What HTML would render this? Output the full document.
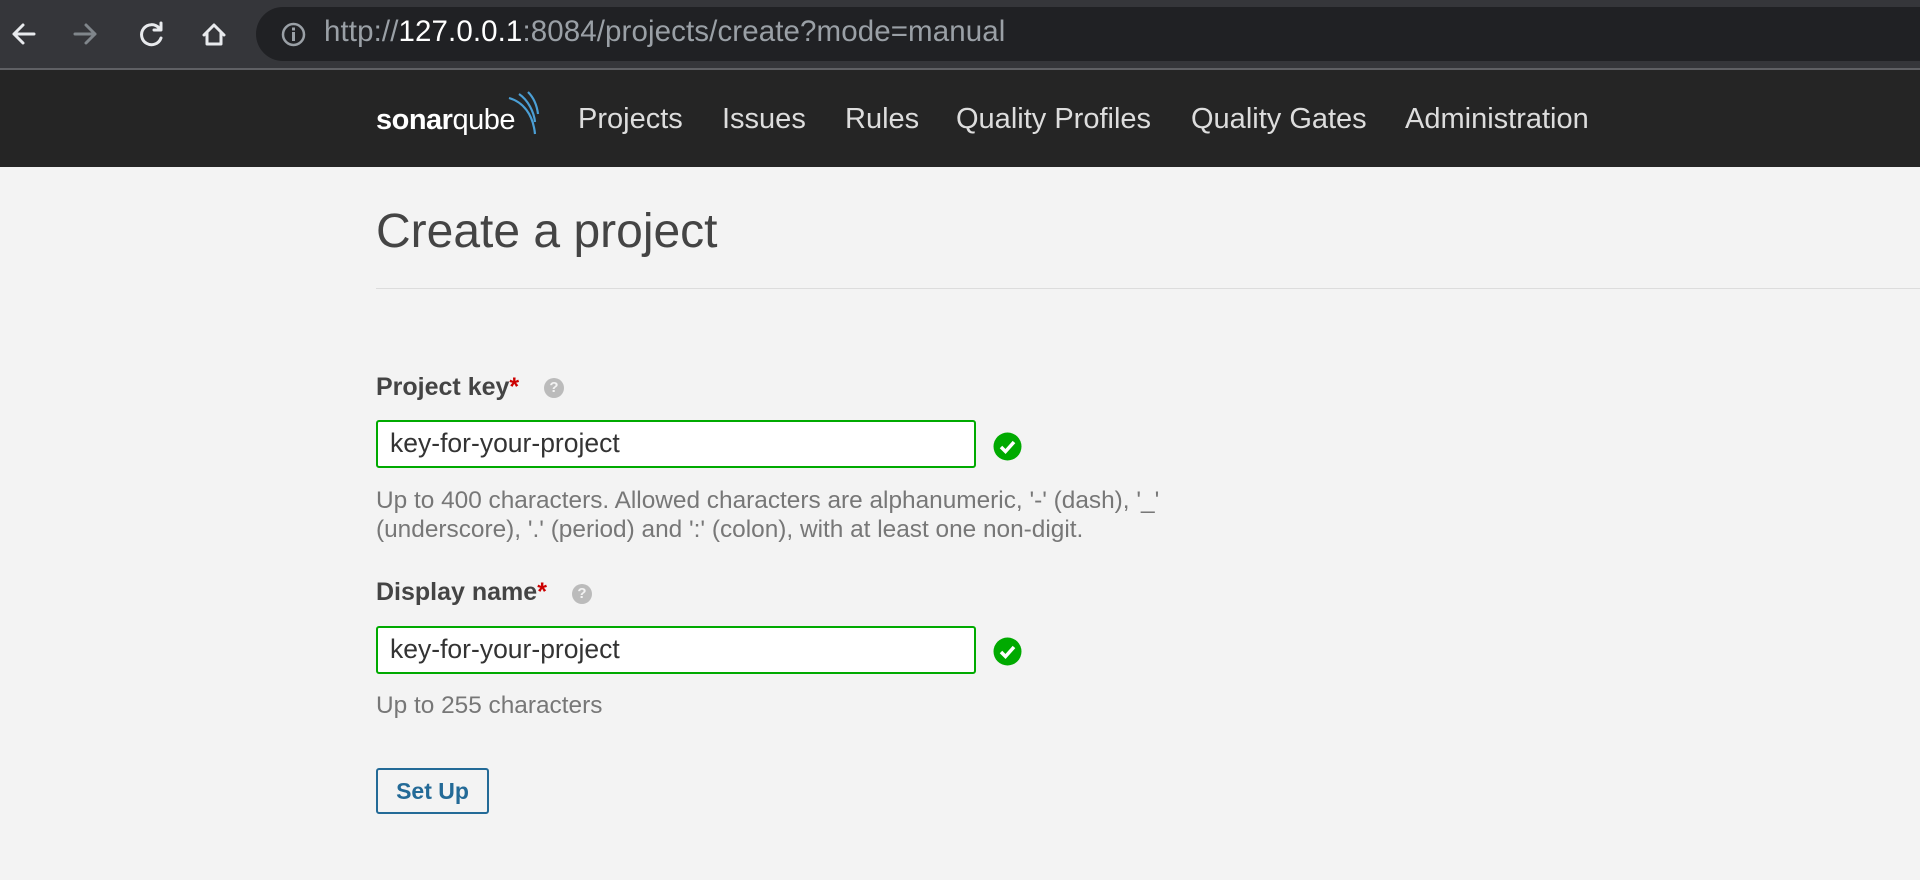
<!DOCTYPE html>
<html><head><meta charset="utf-8"><style>
*{margin:0;padding:0;box-sizing:border-box}
body{width:1920px;height:880px;background:#f3f3f3;font-family:"Liberation Sans",Arial,sans-serif;overflow:hidden;position:relative}
.chrome{position:absolute;left:0;top:0;width:1920px;height:70px;background:#35363a;border-bottom:2px solid #5f6064}
.pill{position:absolute;left:256px;top:7px;width:1700px;height:54px;border-radius:27px;background:#202124}
.url{position:absolute;left:324px;top:15px;font-size:29.5px;color:#9aa0a6;letter-spacing:0.1px}
.url b{color:#fff;font-weight:normal}
.nav{position:absolute;left:0;top:70px;width:1920px;height:97px;background:#252525}
.nav a{position:absolute;top:33px;font-size:29px;color:#ddd;text-decoration:none}
h1{position:absolute;left:376px;top:204px;font-size:48px;font-weight:normal;color:#444}
.hr{position:absolute;left:376px;top:288px;width:1544px;height:1px;background:#dcdcdc}
.lbl{position:absolute;left:376px;font-size:25px;font-weight:bold;color:#444}
.lbl i{color:#c00;font-style:normal}
.help{position:absolute;width:20px;height:20px;border-radius:50%;background:#bbb;color:#f3f3f3;font-size:15px;font-weight:bold;text-align:center;line-height:20px}
.inp{position:absolute;left:376px;width:600px;height:48px;border:2px solid #00aa00;border-radius:3px;background:#fff;font-size:26.5px;color:#333;padding-left:12px;line-height:43px}
.chk{position:absolute;left:993px;width:29px;height:29px}
.hint{position:absolute;left:376px;font-size:24.4px;color:#777;line-height:29px;white-space:nowrap}
.btn{position:absolute;left:376px;top:768px;width:113px;height:46px;border:2px solid #236a97;border-radius:3px;color:#236a97;font-weight:bold;font-size:23px;text-align:center;line-height:42px}
</style></head><body>
<div class="chrome">
<svg style="position:absolute;left:8px;top:20px" width="240" height="30" viewBox="0 0 240 30">
<g fill="none" stroke-width="3" stroke-linecap="round" stroke-linejoin="round">
<path d="M26 14H6M15 5l-9 9 9 9" stroke="#e8eaed"/>
<path d="M67 14H87M78 5l9 9-9 9" stroke="#80868b"/>
<path d="M151 8a10 10 0 1 0 2 10" stroke="#e8eaed"/><path d="M153 3v7h-7" stroke="#e8eaed"/>
<path d="M196 15l10-10 10 10M199 13v11h14V13" stroke="#e8eaed"/>
</g></svg>
<div class="pill"></div>
<svg style="position:absolute;left:281px;top:22px" width="25" height="25" viewBox="0 0 25 25"><circle cx="12.5" cy="12.5" r="10.5" fill="none" stroke="#9aa0a6" stroke-width="2.5"/><rect x="11" y="10" width="3" height="9" fill="#9aa0a6"/><rect x="11" y="5.5" width="3" height="3" fill="#9aa0a6"/></svg>
<div class="url">http://<b>127.0.0.1</b>:8084/projects/create?mode=manual</div>
</div>
<div class="nav">
<div style="position:absolute;left:376px;top:34px;font-size:29px;color:#fff;letter-spacing:-0.5px"><b>sonar</b>qube</div>
<svg style="position:absolute;left:505px;top:20px" width="40" height="52" viewBox="0 0 40 52"><g fill="none" stroke="#4b9fd5" stroke-width="2.2"><path d="M4 8c14 4 24 16 26 36"/><path d="M14 4c9 6 15 18 16 28"/><path d="M23 2c6 6 9 14 10 22"/></g></svg>
<a style="left:578px">Projects</a><a style="left:722px">Issues</a><a style="left:845px">Rules</a><a style="left:956px">Quality Profiles</a><a style="left:1191px">Quality Gates</a><a style="left:1405px">Administration</a>
</div>
<h1>Create a project</h1>
<div class="hr"></div>
<div class="lbl" style="top:373px">Project key<i>*</i></div>
<div class="help" style="left:544px;top:378px">?</div>
<div class="inp" style="top:420px">key-for-your-project</div>
<svg class="chk" style="top:432px" viewBox="0 0 29 29"><circle cx="14.5" cy="14.5" r="14" fill="#00aa00"/><path d="M8 15l4.5 4.5L21 10" fill="none" stroke="#fff" stroke-width="3.5"/></svg>
<div class="hint" style="top:486px">Up to 400 characters. Allowed characters are alphanumeric, '-' (dash), '_'<br>(underscore), '.' (period) and ':' (colon), with at least one non-digit.</div>
<div class="lbl" style="top:578px">Display name<i>*</i></div>
<div class="help" style="left:572px;top:584px">?</div>
<div class="inp" style="top:626px">key-for-your-project</div>
<svg class="chk" style="top:637px" viewBox="0 0 29 29"><circle cx="14.5" cy="14.5" r="14" fill="#00aa00"/><path d="M8 15l4.5 4.5L21 10" fill="none" stroke="#fff" stroke-width="3.5"/></svg>
<div class="hint" style="top:691px">Up to 255 characters</div>
<div class="btn">Set Up</div>
</body></html>
